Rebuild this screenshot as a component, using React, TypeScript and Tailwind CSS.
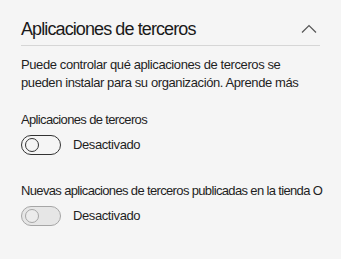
import React from 'react'

function Toggle({ disabled }: { disabled?: boolean }) {
  return (
    <div
      className={
        'flex h-[20px] w-[40px] items-center rounded-full border px-[3px] ' +
        (disabled ? 'border-[#a6a6a6] bg-[#e6e6e6]' : 'border-[#333333] bg-[#f5f5f5]')
      }
    >
      <div
        className={
          'h-[14px] w-[14px] rounded-full border ' +
          (disabled ? 'border-[#a6a6a6] bg-[#ececec]' : 'border-[#333333] bg-transparent')
        }
      />
    </div>
  )
}

function Setting({ label, disabled }: { label: string; disabled?: boolean }) {
  return (
    <div className="flex flex-col gap-[6px]">
      <div className="mr-[-14px] overflow-hidden whitespace-nowrap text-[13px] leading-[18px] tracking-[-0.65px] text-[#1f1f1f]">
        {label}
      </div>
      <div className="flex items-center gap-[12px]">
        <Toggle disabled={disabled} />
        <span className="text-[13px] leading-[18px] tracking-[-0.4px] text-[#1f1f1f]">Desactivado</span>
      </div>
    </div>
  )
}

export default function App() {
  return (
    <div
      className="h-[259px] w-[341px] overflow-hidden bg-[#f5f5f5] px-[21px] pt-[17px]"
      style={{ fontFamily: '"Liberation Sans", Arial, sans-serif' }}
    >
      <div className="flex items-center justify-between border-b border-[#d6d6d6] pb-[4px]">
        <h2 className="text-[18px] leading-[24px] tracking-[-0.9px] text-[#1a1a1a]">Aplicaciones de terceros</h2>
        <svg width="16" height="10" viewBox="0 0 16 10" className="mr-[3px]">
          <path d="M1 8.5 L8 1.5 L15 8.5" fill="none" stroke="#555" strokeWidth="1.2" />
        </svg>
      </div>
      <p className="mt-[10px] text-[13px] leading-[18px] tracking-[-0.4px] text-[#1f1f1f]">
        Puede controlar qué aplicaciones de terceros se pueden instalar para su organización. Aprende más
      </p>
      <div className="mt-[19px] flex flex-col gap-[27px]">
        <Setting label="Aplicaciones de terceros" />
        <Setting label="Nuevas aplicaciones de terceros publicadas en la tienda O" disabled />
      </div>
    </div>
  )
}
